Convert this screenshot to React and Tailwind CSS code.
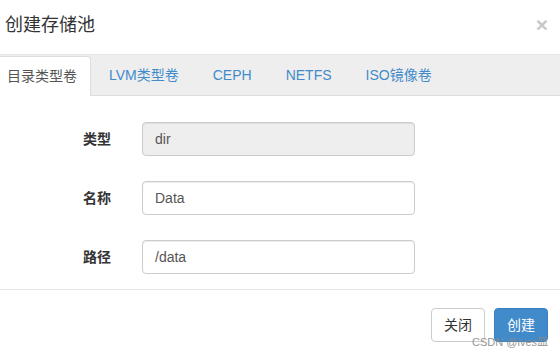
export default function App() {
  const font = { fontFamily: '"Liberation Sans", "Noto Sans CJK SC", sans-serif' };
  const rows = [
    { label: "类型", value: "dir", disabled: true },
    { label: "名称", value: "Data" },
    { label: "路径", value: "/data" },
  ];
  return (
    <div
      className="relative w-[560px] h-[356px] bg-white overflow-hidden flex flex-col font-['Liberation_Sans','Noto_Sans_CJK_SC',sans-serif]"
      style={font}
    >
      <div className="h-[54px] flex items-center justify-between pl-[5px] pr-[12px]">
        <span className="text-[18px] text-[#333] leading-none pb-[4px]">创建存储池</span>
        <span className="text-[21px] font-bold text-[#c8c8c8] leading-none pb-[6px]">×</span>
      </div>
      <div className="h-[42px] bg-[#eeeeee] border-t border-[#e5e5e5] border-b border-b-[#dddddd] flex items-end text-[14px]">
        <div className="h-[40px] w-[91px] -mb-px bg-white border-t border-r border-[#dddddd] rounded-tr-[4px] flex items-center pl-[7px] text-[#555]">
          目录类型卷
        </div>
        <div className="h-[40px] flex items-center text-[#428bca] ml-[2px]">
          <span className="px-[16px] mr-[2px]">LVM类型卷</span>
          <span className="px-[16px] mr-[2px]">CEPH</span>
          <span className="px-[16px] mr-[2px]">NETFS</span>
          <span className="px-[16px] mr-[2px]">ISO镜像卷</span>
        </div>
      </div>
      <div className="pt-[26px] pb-[15px] flex flex-col gap-[25px]">
        {rows.map((r) => (
          <div key={r.label} className="flex items-center h-[34px]">
            <div className="w-[111px] text-right text-[14px] font-bold text-[#333]">{r.label}</div>
            <div
              className={
                "ml-[31px] w-[273px] h-[34px] border border-[#cccccc] rounded-[4px] flex items-center pl-[12px] text-[14px] text-[#555] shadow-[inset_0_1px_1px_rgba(0,0,0,0.075)] " +
                (r.disabled ? "bg-[#eeeeee]" : "bg-white")
              }
            >
              {r.value}
            </div>
          </div>
        ))}
      </div>
      <div className="border-t border-[#e5e5e5] pt-[18px] pr-[12px] flex justify-end gap-[9px]">
        <div className="w-[54px] h-[34px] border border-[#cccccc] rounded-[4px] bg-white flex items-center justify-center text-[14px] text-[#333]">
          关闭
        </div>
        <div className="w-[54px] h-[34px] border border-[#3b80c0] rounded-[4px] bg-[#428bca] flex items-center justify-center text-[14px] text-white">
          创建
        </div>
      </div>
      <div className="absolute right-[12px] bottom-[7px] text-[11px] leading-[13px] text-[#8a8a8a] opacity-90">
        CSDN @ives皿
      </div>
    </div>
  );
}
